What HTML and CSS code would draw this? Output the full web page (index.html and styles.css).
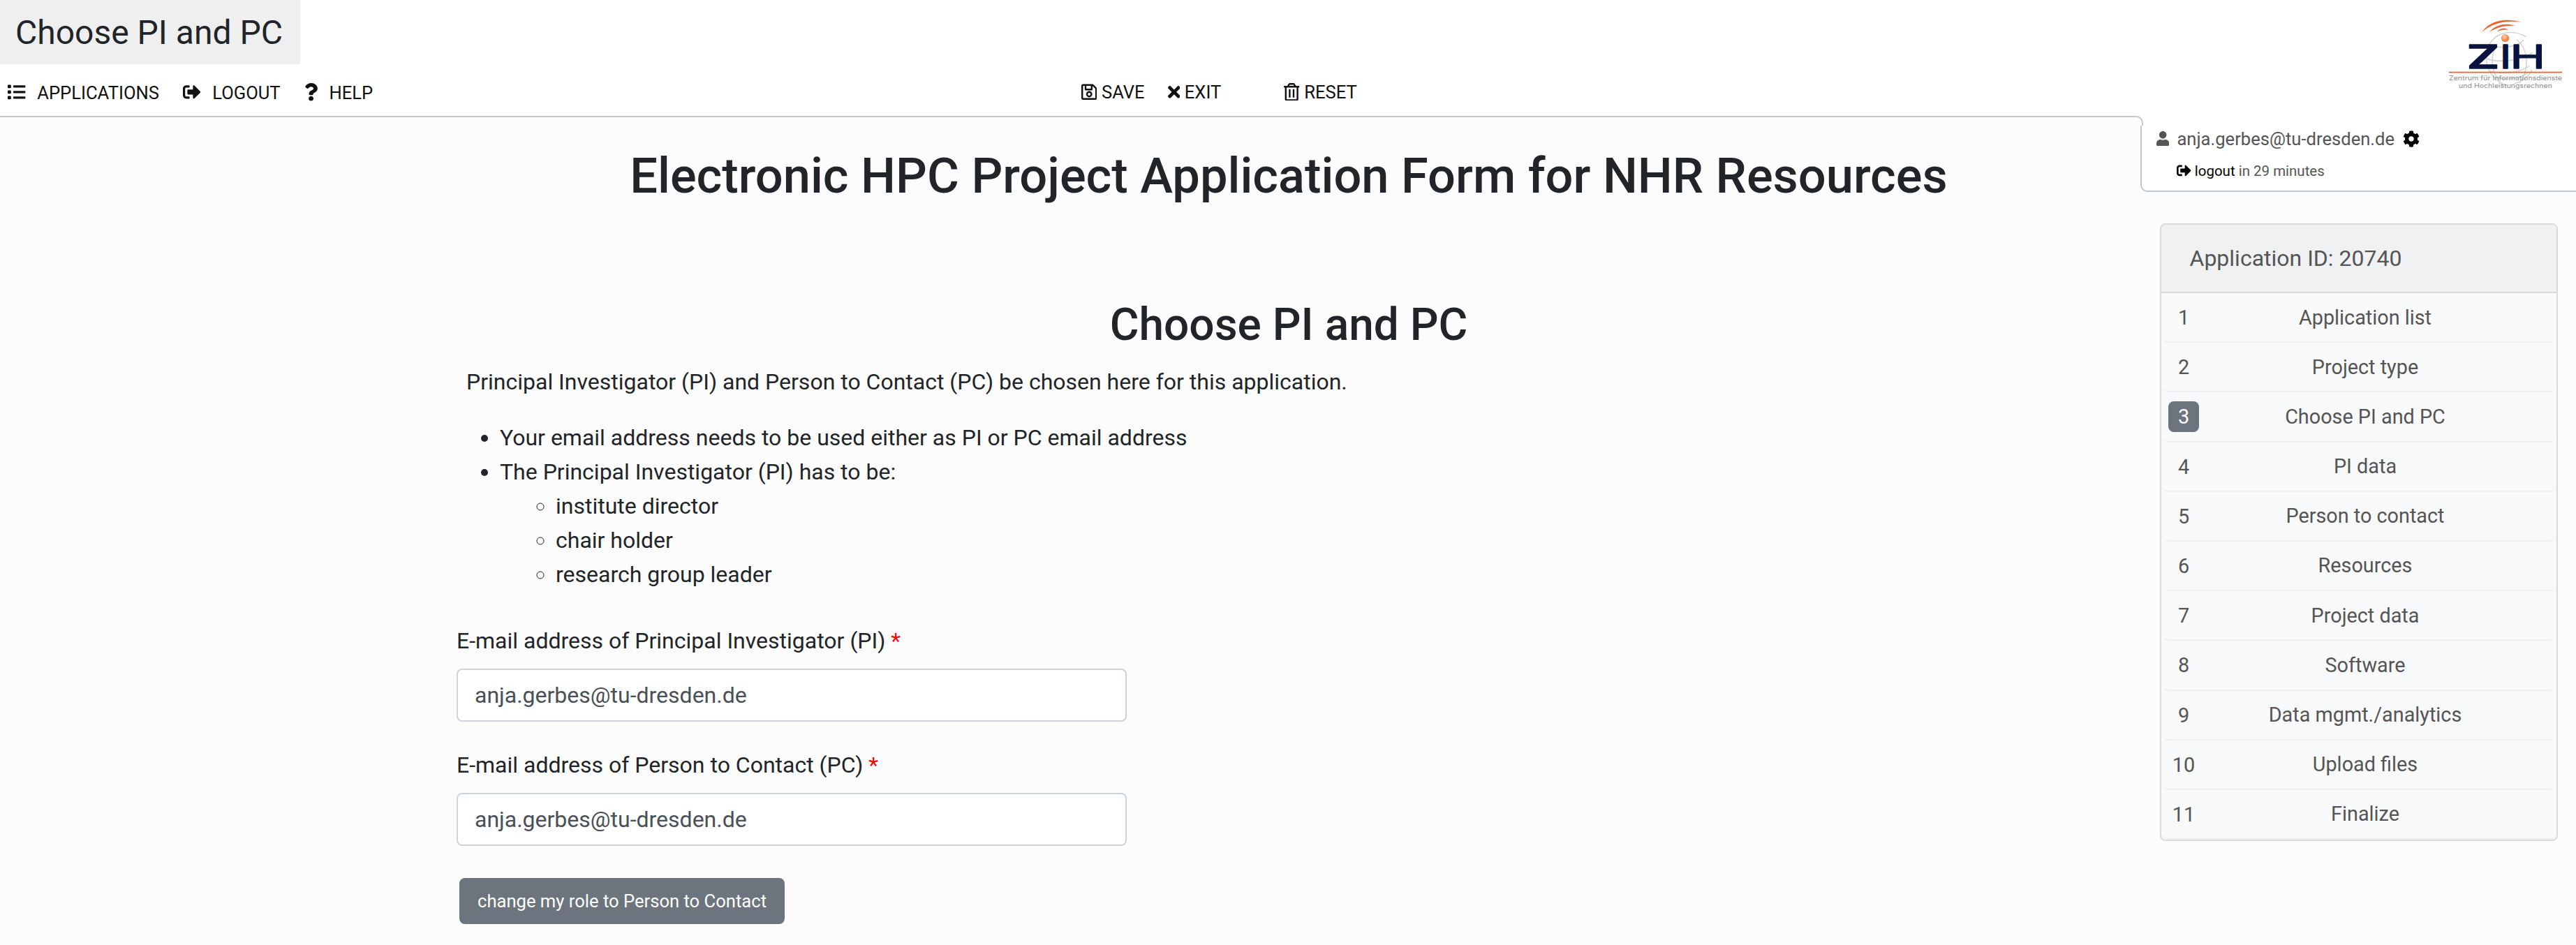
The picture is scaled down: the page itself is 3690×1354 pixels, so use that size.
FILE: index.html
```
<!DOCTYPE html>
<html lang="en">
<head>
<meta charset="utf-8">
<title>Choose PI and PC</title>
<link rel="stylesheet" href="styles.css">
</head>
<body>
<svg class="sprite" aria-hidden="true">
  <symbol id="list" viewBox="0 0 512 512"><path d="M80 368H16a16 16 0 0 0-16 16v64a16 16 0 0 0 16 16h64a16 16 0 0 0 16-16v-64a16 16 0 0 0-16-16zm0-320H16A16 16 0 0 0 0 64v64a16 16 0 0 0 16 16h64a16 16 0 0 0 16-16V64a16 16 0 0 0-16-16zm0 160H16a16 16 0 0 0-16 16v64a16 16 0 0 0 16 16h64a16 16 0 0 0 16-16v-64a16 16 0 0 0-16-16zm416 176H176a16 16 0 0 0-16 16v32a16 16 0 0 0 16 16h320a16 16 0 0 0 16-16v-32a16 16 0 0 0-16-16zm0-320H176a16 16 0 0 0-16 16v32a16 16 0 0 0 16 16h320a16 16 0 0 0 16-16V80a16 16 0 0 0-16-16zm0 160H176a16 16 0 0 0-16 16v32a16 16 0 0 0 16 16h320a16 16 0 0 0 16-16v-32a16 16 0 0 0-16-16z"/></symbol>
  <symbol id="sign-out" viewBox="0 0 512 512"><path d="M497 273L329 441c-15 15-41 4.500-41-17v-96H152c-13.300 0-24-10.700-24-24v-96c0-13.300 10.700-24 24-24h136V88c0-21.400 25.900-32 41-17l168 168c9.300 9.400 9.300 24.600 0 34zM192 436v-40c0-6.600-5.400-12-12-12H96c-17.700 0-32-14.300-32-32V160c0-17.700 14.300-32 32-32h84c6.600 0 12-5.400 12-12V76c0-6.600-5.400-12-12-12H96c-53 0-96 43-96 96v192c0 53 43 96 96 96h84c6.600 0 12-5.400 12-12z"/></symbol>
  <symbol id="question" viewBox="0 0 384 512"><path d="M202.021 0C122.202 0 70.503 32.703 29.914 91.026c-7.363 10.580-5.093 25.086 5.178 32.874l43.138 32.709c10.373 7.865 25.132 6.026 33.253-4.148 25.049-31.381 43.630-49.449 82.757-49.449 30.764 0 68.816 19.799 68.816 49.631 0 22.552-18.617 34.134-48.993 51.164-35.423 19.860-82.299 44.576-82.299 106.405V320c0 13.255 10.745 24 24 24h72.471c13.255 0 24-10.745 24-24v-5.773c0-42.860 125.268-44.645 125.268-160.627C377.504 66.256 286.902 0 202.021 0zM192 373.459c-38.196 0-69.271 31.075-69.271 69.271 0 38.195 31.075 69.270 69.271 69.270s69.271-31.075 69.271-69.271-31.075-69.270-69.271-69.270z"/></symbol>
  <symbol id="save" viewBox="0 0 448 512"><path d="M433.941 129.941l-83.882-83.882A48 48 0 0 0 316.118 32H48C21.490 32 0 53.490 0 80v352c0 26.510 21.490 48 48 48h352c26.510 0 48-21.490 48-48V163.882a48 48 0 0 0-14.059-33.941zM272 80v80H144V80h128zm122 352H54a6 6 0 0 1-6-6V86a6 6 0 0 1 6-6h42v104c0 13.255 10.745 24 24 24h176c13.255 0 24-10.745 24-24V83.882l78.243 78.243a6 6 0 0 1 1.757 4.243V426a6 6 0 0 1-6 6zM224 232c-48.523 0-88 39.477-88 88s39.477 88 88 88 88-39.477 88-88-39.477-88-88-88zm0 128c-22.056 0-40-17.944-40-40s17.944-40 40-40 40 17.944 40 40-17.944 40-40 40z"/></symbol>
  <symbol id="times" viewBox="0 0 352 512"><path d="M242.720 256l100.070-100.070c12.280-12.280 12.280-32.190 0-44.480l-22.240-22.240c-12.280-12.280-32.190-12.280-44.480 0L176 189.280 75.930 89.210c-12.280-12.280-32.190-12.280-44.480 0L9.210 111.450c-12.280 12.280-12.280 32.190 0 44.480L109.280 256 9.210 356.070c-12.280 12.280-12.280 32.190 0 44.480l22.240 22.240c12.280 12.280 32.200 12.280 44.480 0L176 322.720l100.070 100.070c12.280 12.280 32.200 12.280 44.480 0l22.240-22.240c12.280-12.280 12.280-32.190 0-44.480L242.720 256z"/></symbol>
  <symbol id="trash" viewBox="0 0 448 512"><path d="M268 416h24a12 12 0 0 0 12-12V188a12 12 0 0 0-12-12h-24a12 12 0 0 0-12 12v216a12 12 0 0 0 12 12zM432 80h-82.410l-34-56.700A48 48 0 0 0 274.410 0H173.590a48 48 0 0 0-41.160 23.300L98.410 80H16A16 16 0 0 0 0 96v16a16 16 0 0 0 16 16h16v336a48 48 0 0 0 48 48h288a48 48 0 0 0 48-48V128h16a16 16 0 0 0 16-16V96a16 16 0 0 0-16-16zM171.840 50.910A6 6 0 0 1 177 48h94a6 6 0 0 1 5.150 2.910L293.610 80H154.390zM368 464H80V128h288zm-212-48h24a12 12 0 0 0 12-12V188a12 12 0 0 0-12-12h-24a12 12 0 0 0-12 12v216a12 12 0 0 0 12 12z"/></symbol>
  <symbol id="user" viewBox="0 0 448 512"><path d="M224 256c70.700 0 128-57.300 128-128S294.700 0 224 0 96 57.300 96 128s57.300 128 128 128zm89.600 32h-16.700c-22.200 10.200-46.900 16-72.900 16s-50.600-5.800-72.900-16h-16.700C60.200 288 0 348.200 0 422.400V464c0 26.500 21.500 48 48 48h352c26.500 0 48-21.500 48-48v-41.600c0-74.200-60.200-134.400-134.400-134.400z"/></symbol>
  <symbol id="cog" viewBox="0 0 512 512"><path d="M487.400 315.700l-42.600-24.600c4.300-23.200 4.300-47 0-70.200l42.600-24.600c4.900-2.800 7.100-8.600 5.500-14-11.100-35.600-30-67.800-54.700-94.600-3.800-4.100-10-5.100-14.800-2.300L380.800 110c-17.900-15.400-38.500-27.300-60.800-35.100V25.800c0-5.600-3.900-10.500-9.400-11.700-36.700-8.200-74.300-7.800-109.200 0-5.500 1.200-9.400 6.100-9.400 11.700V75c-22.200 7.900-42.800 19.800-60.800 35.100L88.700 85.500c-4.900-2.800-11-1.900-14.800 2.300-24.700 26.700-43.600 58.900-54.700 94.600-1.700 5.400.6 11.200 5.500 14L67.300 221c-4.300 23.200-4.300 47 0 70.200l-42.600 24.600c-4.900 2.800-7.100 8.600-5.500 14 11.100 35.600 30 67.800 54.700 94.600 3.800 4.100 10 5.100 14.800 2.300l42.600-24.600c17.900 15.400 38.500 27.300 60.800 35.100v49.200c0 5.600 3.900 10.500 9.400 11.700 36.700 8.200 74.300 7.800 109.200 0 5.500-1.200 9.400-6.100 9.400-11.700v-49.200c22.200-7.900 42.800-19.800 60.800-35.100l42.600 24.600c4.900 2.800 11 1.900 14.800-2.300 24.700-26.700 43.600-58.900 54.700-94.600 1.500-5.500-.7-11.300-5.600-14.100zM256 336c-44.100 0-80-35.900-80-80s35.900-80 80-80 80 35.900 80 80-35.900 80-80 80z"/></symbol>
</svg>

<header class="topbar">
  <div class="topbar-left">
    <div class="page-title">Choose PI and PC</div>
    <nav class="menu">
      <div class="menu-main">
        <a class="menu-item"><svg class="icon"><use href="#list"/></svg>APPLICATIONS</a>
        <a class="menu-item"><svg class="icon"><use href="#sign-out"/></svg>LOGOUT</a>
        <a class="menu-item"><svg class="icon icon-question"><use href="#question"/></svg>HELP</a>
      </div>
      <div class="menu-actions">
        <a class="action"><svg class="icon icon-narrow"><use href="#save"/></svg>SAVE</a>
        <a class="action"><svg class="icon icon-times"><use href="#times"/></svg>EXIT</a>
        <a class="action action-reset"><svg class="icon icon-narrow"><use href="#trash"/></svg>RESET</a>
      </div>
    </nav>
  </div>
  <svg class="logo" viewBox="0 0 200 130" role="img">
    <defs>
      <radialGradient id="ball" cx=".4" cy=".35" r=".7"><stop offset="0" stop-color="#fdd5b8"/><stop offset=".55" stop-color="#fb9355"/><stop offset="1" stop-color="#ee6a22"/></radialGradient>
    </defs>
    <g fill="none" stroke="#cfcfd0" stroke-width="1.400">
      <path d="M129 43c-20-12-48-8-56 18-6 24 6 44 28 52M137 90c-6 12-16 18-26 20"/>
      <path d="M75 53c12 8 42 5 50-6M72 74c16 6 50 4 66-9M76 92c18 5 42 3 58-8M84 101c16 4 34 2 46-6"/>
      <path d="M84 59c-8 18-4 38 12 54M115 47c18 14 18 44 4 62"/>
    </g>
    <g fill="#f0622a">
      <path d="M65 36c12-17 34-21 57-14-22-4-42 1-57 14z"/>
      <path d="M76 36c8-10 22-14 37-9-14-1-26 2-37 9z"/>
      <path d="M87 35c5-5 12-6 16-2-6-1-10 0-16 2z"/>
    </g>
    <circle cx="98.500" cy="44.500" r="5.600" fill="url(#ball)"/>
    <g class="logo-name">
      <text x="43.800" y="88.300" textLength="46.500" lengthAdjust="spacingAndGlyphs">Z</text>
      <text x="92.500" y="88.300">I</text>
      <text class="logo-h" x="105.500" y="88.300" textLength="50.500" lengthAdjust="spacingAndGlyphs">H</text>
    </g>
    <path d="M18 93.700H180" stroke="#f0622a" stroke-width="1.700"/>
    <g class="logo-caption">
      <text x="18" y="105.300" textLength="162" lengthAdjust="spacingAndGlyphs">Zentrum für Informationsdienste</text>
      <text x="32" y="116" textLength="134" lengthAdjust="spacingAndGlyphs">und Hochleistungsrechnen</text>
    </g>
  </svg>
</header>

<div class="layout">
  <main class="content">
    <h1>Electronic HPC Project Application Form for NHR Resources</h1>
    <h2>Choose PI and PC</h2>
    <p class="intro">Principal Investigator (PI) and Person to Contact (PC) be chosen here for this application.</p>
    <ul class="rules">
      <li>Your email address needs to be used either as PI or PC email address</li>
      <li>The Principal Investigator (PI) has to be:
        <ul>
          <li>institute director</li>
          <li>chair holder</li>
          <li>research group leader</li>
        </ul>
      </li>
    </ul>
    <form class="form">
      <div class="field">
        <label for="pi">E-mail address of Principal Investigator (PI) <span class="required">*</span></label>
        <input id="pi" type="text" value="anja.gerbes@tu-dresden.de">
      </div>
      <div class="field">
        <label for="pc">E-mail address of Person to Contact (PC) <span class="required">*</span></label>
        <input id="pc" type="text" value="anja.gerbes@tu-dresden.de">
      </div>
      <button class="role-button" type="button">change my role to Person to Contact</button>
    </form>
  </main>

  <aside class="side">
    <section class="account">
      <div class="account-user"><svg class="icon icon-user"><use href="#user"/></svg><span>anja.gerbes@tu-dresden.de</span><svg class="icon icon-cog"><use href="#cog"/></svg></div>
      <div class="account-session"><svg class="icon icon-session"><use href="#sign-out"/></svg><span><a class="session-link">logout</a> in 29 minutes</span></div>
    </section>
    <section class="steps">
      <div class="steps-head">Application ID: 20740</div>
      <ol class="steps-list">
        <li><span class="num">1</span><span class="name">Application list</span></li>
        <li><span class="num">2</span><span class="name">Project type</span></li>
        <li><span class="num current">3</span><span class="name">Choose PI and PC</span></li>
        <li><span class="num">4</span><span class="name">PI data</span></li>
        <li><span class="num">5</span><span class="name">Person to contact</span></li>
        <li><span class="num">6</span><span class="name">Resources</span></li>
        <li><span class="num">7</span><span class="name">Project data</span></li>
        <li><span class="num">8</span><span class="name">Software</span></li>
        <li><span class="num">9</span><span class="name">Data mgmt./analytics</span></li>
        <li><span class="num">10</span><span class="name">Upload files</span></li>
        <li><span class="num">11</span><span class="name">Finalize</span></li>
      </ol>
    </section>
  </aside>
</div>
</body>
</html>
```
FILE: styles.css
```
* { box-sizing: border-box; }

html { font-size: 32px; }

body {
  margin: 0;
  min-height: 1354px;
  background: #fcfcfc;
  color: #212529;
  font-family: Roboto, "Liberation Sans", sans-serif;
  line-height: 1.5;
  overflow: hidden;
}

.sprite { display: none; }

.icon {
  flex: none;
  width: 25.6px;
  height: 25.6px;
  fill: currentColor;
}

/* Top bar */
.topbar {
  display: flex;
  justify-content: space-between;
  height: 166px;
  background: #fff;
}

.page-title {
  width: 430px;
  height: 92px;
  padding-left: 22px;
  background: #efefef;
  font-size: 48px;
  line-height: 93px;
}

.menu {
  display: flex;
  padding: 22px 0 0 11px;
  color: #111;
  font-size: 25.6px;
  line-height: 38px;
}

.menu-main {
  display: flex;
  gap: 34px;
  width: 1538px;
}

.menu-item {
  display: flex;
  align-items: center;
  gap: 16.6px;
}

.menu-item .icon { margin-top: -2px; }
.icon-question { width: 19.2px; }

.menu-actions {
  display: flex;
  gap: 33px;
  line-height: 36px;
  height: 36px;
}

.action {
  display: flex;
  align-items: center;
  gap: 6.6px;
}

.action .icon { margin-top: -1px; }
.action-reset { margin-left: 57px; }
.icon-narrow { width: 22.4px; }
.icon-times { width: 17.6px; }

.logo {
  flex: none;
  width: 200px;
  height: 130px;
  margin-top: 10px;
}

.logo-name {
  fill: #08133f;
  stroke: #08133f;
  stroke-width: 1.4px;
  stroke-linejoin: round;
  font: 600 47px Inter, sans-serif;
}

.logo-h { font-weight: 400; }

.logo-caption {
  fill: #8a8b8d;
  font: 400 8.6px Inter, sans-serif;
}

/* Page body */
.layout { display: flex; }

.content {
  flex: none;
  width: 3066px;
  padding: 42px 28px 0 654px;
  border-top: 2px solid #c1c7cb;
}

h1, h2, p, ul, ol { margin: 0; }

h1, h2 {
  font-weight: 500;
  line-height: 1.2;
  text-align: center;
}

h1 { font-size: 70.4px; margin-bottom: 134px; }
h2 { font-size: 64px; margin-bottom: 17.8px; }

.intro { padding-left: 14px; }

.rules {
  margin-top: 32.4px;
  padding-left: 62px;
  line-height: 49px;
}

.rules ul { padding-left: 80px; }

.form {
  display: flex;
  flex-direction: column;
  align-items: flex-start;
  margin-top: 45.4px;
}

.field {
  display: flex;
  flex-direction: column;
  gap: 16px;
  margin-bottom: 38px;
}

.required { color: #f00; }

input {
  width: 960px;
  height: 76px;
  padding: 0 24px;
  border: 2px solid #ced4da;
  border-radius: 8px;
  background: #fff;
  color: #495057;
  font: inherit;
}

.role-button {
  height: 66px;
  margin: 8px 0 0 4px;
  padding: 0 26px;
  border: 0;
  border-radius: 8px;
  background: #6c757d;
  color: #fff;
  font: 25.6px/38px Roboto, sans-serif;
}

/* Right column */
.side {
  width: 624px;
  color: #555;
}

.account {
  position: relative;
  height: 109px;
  padding: 14px 0 0 21px;
  background: #fff;
  border-left: 2px solid #c1c7cb;
  border-bottom: 2px solid #c1c7cb;
  border-bottom-left-radius: 10px;
}

/* rounded joint between the header rule and the account box */
.account::before,
.account::after {
  content: "";
  position: absolute;
  top: 0;
  left: -12px;
  width: 12px;
  height: 12px;
  background: #fff;
}

.account::after {
  border-top: 2px solid #c1c7cb;
  border-right: 2px solid #c1c7cb;
  border-top-right-radius: 10px;
  background: #fcfcfc;
}

.account-user {
  display: flex;
  align-items: center;
  height: 38px;
  font-size: 25.6px;
}

.icon-user { width: 18.4px; height: 21.2px; margin-right: 11px; }
.icon-cog { width: 24px; height: 24px; margin-left: 11.5px; color: #000; }

.account-session {
  display: flex;
  align-items: center;
  gap: 5px;
  height: 32px;
  margin-top: 11px;
  padding-left: 29px;
  font-size: 20.48px;
}

.icon-session { width: 20.8px; height: 20.8px; margin-top: -1px; color: #000; }
.session-link { color: #000; }

.steps {
  width: 570px;
  margin: 45px 0 0 28px;
  border: 2px solid #d9dadb;
  border-radius: 8px;
  background: #f8f9fa;
  overflow: hidden;
}

.steps-head {
  height: 98px;
  padding-left: 40.5px;
  border-bottom: 2px solid #d6d8da;
  background: #f0f1f2;
  line-height: 96px;
}

.steps-list {
  padding: 0 2px;
  list-style: none;
  font-size: 28.8px;
}

.steps-list li {
  display: flex;
  align-items: center;
  height: 71.2px;
  padding: 1px 34px 0 8px;
  border-bottom: 2px solid #eeeff0;
  border-radius: 8px;
}

.num {
  flex: none;
  width: 44px;
  height: 44px;
  border-radius: 8px;
  line-height: 44px;
  text-align: center;
}

.num.current { background: #6c757d; color: #fff; }

.name {
  flex: 1;
  text-align: center;
}
```
